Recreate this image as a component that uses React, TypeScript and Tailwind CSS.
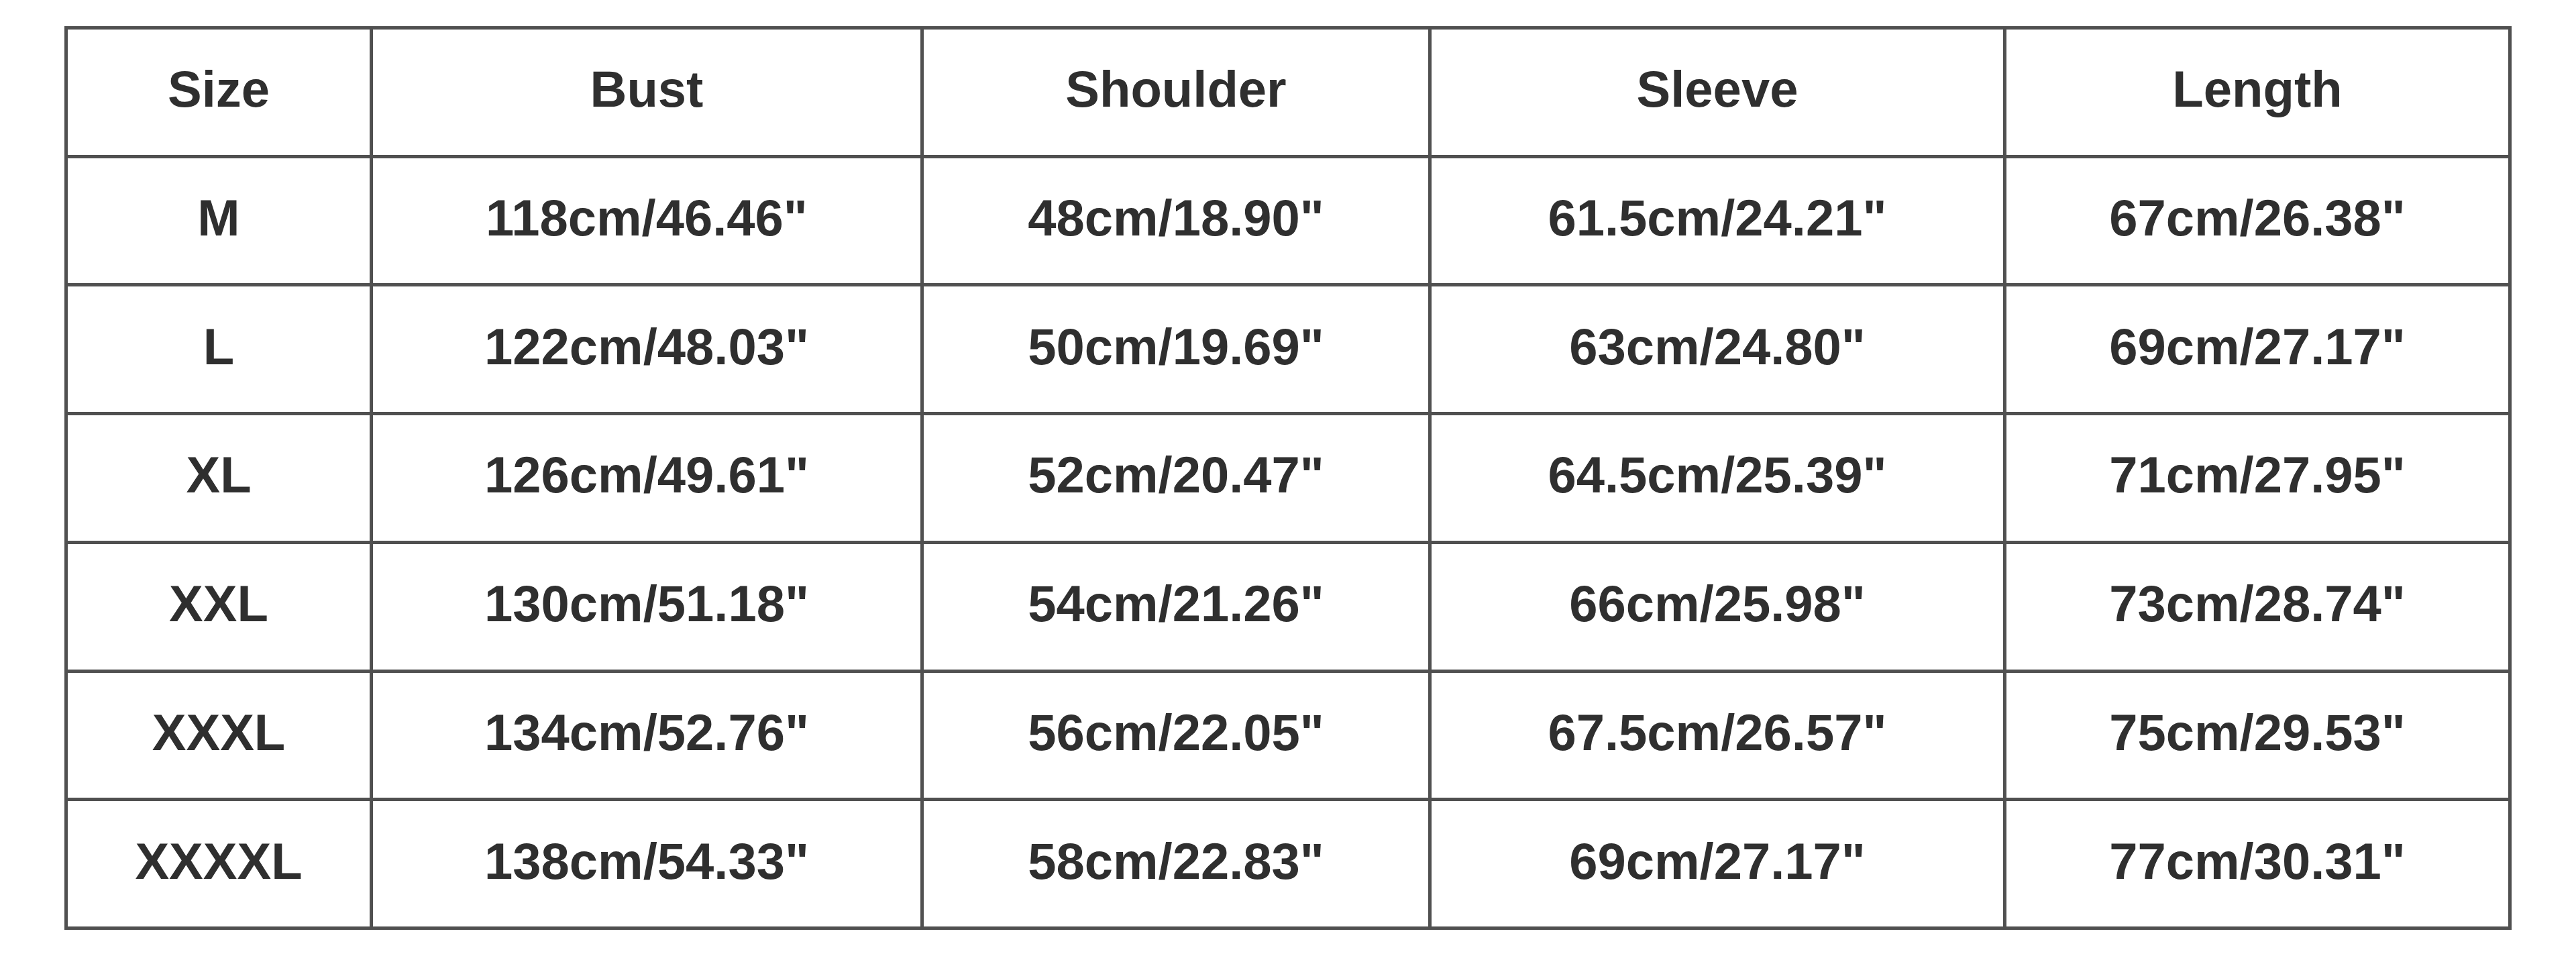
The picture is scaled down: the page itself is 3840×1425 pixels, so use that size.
const headers = ["Size", "Bust", "Shoulder", "Sleeve", "Length"];

const rows = [
  ["M", "118cm/46.46\"", "48cm/18.90\"", "61.5cm/24.21\"", "67cm/26.38\""],
  ["L", "122cm/48.03\"", "50cm/19.69\"", "63cm/24.80\"", "69cm/27.17\""],
  ["XL", "126cm/49.61\"", "52cm/20.47\"", "64.5cm/25.39\"", "71cm/27.95\""],
  ["XXL", "130cm/51.18\"", "54cm/21.26\"", "66cm/25.98\"", "73cm/28.74\""],
  ["XXXL", "134cm/52.76\"", "56cm/22.05\"", "67.5cm/26.57\"", "75cm/29.53\""],
  ["XXXXL", "138cm/54.33\"", "58cm/22.83\"", "69cm/27.17\"", "77cm/30.31\""],
];

function Cell({ children }: { children: React.ReactNode }) {
  return (
    <div className="flex items-center justify-center bg-white pb-[8px] text-[76px] font-bold leading-none text-[#2f2f2f]">
      {children}
    </div>
  );
}

export default function App() {
  return (
    <div
      className="h-[1425px] w-[3840px] bg-white pl-[96px] pt-[39px]"
      style={{ fontFamily: '"Liberation Sans", Arial, sans-serif' }}
    >
      <div className="grid h-[1347px] w-[3648px] grid-cols-[450px_816px_752px_852px_748px] grid-rows-7 gap-[5px] bg-[#505050] p-[5px]">
        {headers.map((h) => (
          <Cell key={h}>{h}</Cell>
        ))}
        {rows.map((r) =>
          r.map((v, i) => <Cell key={r[0] + i}>{v}</Cell>)
        )}
      </div>
    </div>
  );
}
